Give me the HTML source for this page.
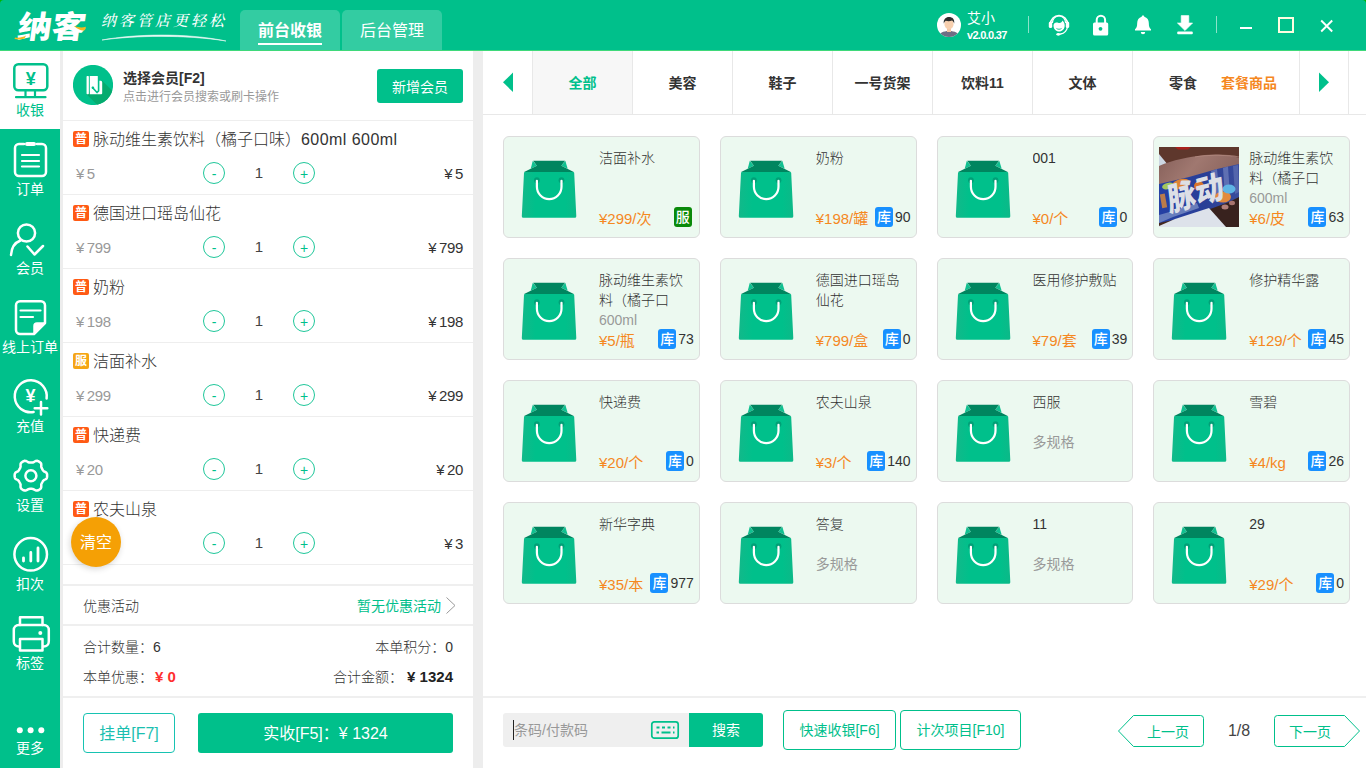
<!DOCTYPE html><html lang="zh-CN"><head><meta charset="utf-8"><title>纳客收银</title><style>
*{box-sizing:border-box;margin:0;padding:0}
html,body{width:1366px;height:768px;overflow:hidden}
body{position:relative;background:#ededed;font-family:"Liberation Sans","Noto Sans CJK SC",sans-serif;color:#333;font-size:14px;font-weight:300}
.abs{position:absolute}
b{font-weight:700}
#hdr{left:0;top:0;width:1366px;height:50px;background:#00c08b;border-radius:4px 4px 0 0}
#hline{left:0;top:50px;width:1366px;height:1px;background:#3fd97a}
#logo{left:15px;top:8px;font-size:31px;line-height:40px;font-weight:900;color:#fff;letter-spacing:0px;transform:skewX(-8deg) scaleX(1.1);transform-origin:0 100%;font-family:"Liberation Sans","Noto Sans CJK SC",sans-serif;white-space:nowrap}
#slogan{left:101px;top:9px;font-size:15px;line-height:24px;color:#fff;font-style:italic;font-weight:500;font-family:"Liberation Serif","Noto Serif CJK SC",serif;letter-spacing:3px;white-space:nowrap}
.tab{font-weight:400;top:10px;height:40px;width:100px;background:rgba(255,255,255,.2);border-radius:5px 5px 0 0;color:#fff;font-size:16px;line-height:22px;text-align:center;padding-top:10px}
.tab b{display:inline-block;border-bottom:2px solid #fff;padding-bottom:1px;font-weight:700}
#side{left:0;top:51px;width:60px;height:717px;background:#00c08b}
.sit{left:0;width:60px;height:79px;color:#fff;text-align:center}
.sit svg{position:absolute;left:0;top:0}
.sit span{font-weight:400;position:absolute;left:-10px;width:80px;top:49px;font-size:14px;line-height:20px;white-space:nowrap}
.sit.on span{font-weight:400}
.sit.on{background:#fff;color:#00c08b;height:78px}
#lp{left:63px;top:51px;width:410px;height:717px;background:#fff}
#rp{left:483px;top:51px;width:883px;height:717px;background:#fff}
.row{left:0;width:410px;height:74px;border-bottom:1px solid #eee}
.bdg{position:absolute;left:10px;top:10px;width:16px;height:16px;border-radius:2px;background:#ff5a14;color:#fff;font-size:12px;line-height:16px;text-align:center;font-weight:700}
.bdg.fu{background:#f5a514}
.nm{position:absolute;left:30px;top:7px;font-size:16px;line-height:24px;white-space:nowrap}
.pr{position:absolute;left:13px;top:41px;font-size:15px;letter-spacing:-0.35px;word-spacing:-1px;line-height:24px;color:#999;white-space:pre}
.tot{position:absolute;right:10px;top:41px;font-size:15px;letter-spacing:-0.35px;word-spacing:-1px;line-height:24px;color:#333;white-space:pre}
.cir{position:absolute;top:41px;width:22px;height:22px;border:1px solid #1fc79a;border-radius:50%;color:#00c08b;font-size:14px;line-height:22px;text-align:center}
.qty{position:absolute;left:180px;width:32px;top:40px;font-size:15px;color:#444;line-height:24px;text-align:center}
.hr2{left:0;width:410px;height:2px;background:#efefef}
.t14{font-size:14px;line-height:20px;white-space:nowrap}
.cat{top:0;height:63px;width:100px;border-right:1px solid #e8e8e8;text-align:center;font-size:14px;line-height:65px;font-weight:700;color:#333}
.card{width:196.75px;height:102px;background:#ecf9f0;border:1px solid #dcdcdc;border-radius:6px}
.card svg.bag{position:absolute;left:11px;top:17px}
.card .cn{position:absolute;left:95px;top:11px;width:88px;max-height:40px;overflow:hidden;font-size:14px;line-height:20px;color:#333}
.card .sp{font-weight:400;position:absolute;left:95px;top:51px;font-size:14px;line-height:20px;color:#999;white-space:nowrap}
.card .cp{font-weight:400;position:absolute;left:95px;top:71px;font-size:15px;line-height:22px;color:#f5881f;white-space:nowrap}
.card .st{position:absolute;right:5px;top:70px;height:20px;font-size:14px;line-height:20px;color:#333;white-space:nowrap}
.card .st i{font-weight:500;display:inline-block;vertical-align:top;width:18px;height:20px;border-radius:3px;background:#1890ff;color:#fff;font-style:normal;font-size:14px;line-height:20px;text-align:center;margin-right:2px}
.card .st i.fu{background:#0a8a0a;margin-right:2px;font-weight:500}
.btn{font-weight:400;border:1px solid #00c08b;border-radius:4px;color:#00c08b;text-align:center;font-size:14px;background:#fff;white-space:nowrap}
</style></head><body>
<div class="abs" style="left:0;top:0;width:5px;height:5px;background:#00b400"></div><div class="abs" style="left:1361px;top:0;width:5px;height:5px;background:#00b400"></div>
<div id="hdr" class="abs"></div><div id="hline" class="abs"></div>
<div id="logo" class="abs">纳客</div>
<svg class="abs" style="left:12px;top:20px" width="80" height="24" viewBox="0 0 80 24"><path d="M3 17.5c4 0.8 8-0.3 11-2l-1.5 3c-3.5 1.2-7 1.2-10 0.5z" fill="#f5b81e"/><path d="M62 6c4 1.5 8 2 12 0.8l-1.2 3.5c-3.5 0.5-7-0.8-10.8-4.3z" fill="#f5b81e"/></svg>
<div id="slogan" class="abs">纳客管店更轻松</div>
<svg class="abs" style="left:100px;top:32px" width="130" height="10" viewBox="0 0 130 10"><path d="M2 8C35 2 85 0.5 126 9C85 2.5 35 3.5 2 8z" fill="#fff" stroke="#fff" stroke-width="0.6" opacity=".9"/></svg>
<div class="abs tab" style="left:240px"><b>前台收银</b></div>
<div class="abs tab" style="left:342px">后台管理</div>
<svg class="abs" style="left:937px;top:13px" width="24" height="24" viewBox="0 0 24 24"><defs><clipPath id="avc"><circle cx="12" cy="12" r="12"/></clipPath></defs><circle cx="12" cy="12" r="12" fill="#fff"/><g clip-path="url(#avc)"><path d="M2 24c0-4 4-6 10-6s10 2 10 6z" fill="#6e6e84"/><rect x="10" y="14" width="4" height="5" fill="#f3c6a5"/><ellipse cx="12" cy="11" rx="4.6" ry="5.4" fill="#f7cfae"/><path d="M6.8 10.5c-0.6-4 2-6.5 5.2-6.5s5.8 2 5.2 6.5c-0.5-1.5-1.2-2.5-2.2-3-2 0.8-4.5 0.8-6.2 0.2-1 0.6-1.6 1.5-2 2.8z" fill="#2e2e2e"/></g></svg>
<div class="abs" style="left:967px;top:8px;color:#fff;font-size:14px;font-weight:400;line-height:20px;white-space:nowrap">艾小</div>
<div class="abs" style="left:967px;top:28px;color:#fff;font-size:11px;line-height:14px;font-weight:700;letter-spacing:-0.7px;white-space:nowrap">v2.0.0.37</div>
<div class="abs" style="left:1028px;top:16px;width:1px;height:17px;background:rgba(255,255,255,.55)"></div>
<svg class="abs" style="left:1047px;top:12px" width="24" height="26" viewBox="0 0 24 26"><g fill="none" stroke="#fff" stroke-linecap="round"><path d="M3.5 12a8.5 8.5 0 0 1 17 0" stroke-width="1.6"/><path d="M5.5 10.5a6.5 6.5 0 0 1 13 0" stroke-width="1.2"/><path d="M20.5 14c0 4-3 7.5-7 8" stroke-width="1.3"/></g><rect x="1.8" y="9.5" width="3.4" height="6.5" rx="1.6" fill="#fff"/><rect x="18.8" y="9.5" width="3.4" height="6.5" rx="1.6" fill="#fff"/><path d="M6.5 13.5c0-2 1.5-3 3-3 1.2 0 2 0.5 3 0.5 1.5 0 2.5-1.2 3-2.5 1.5 1.5 2.2 3 2.2 5 0 3.5-2.5 6-5.6 6s-5.6-2.5-5.6-6z" fill="#fff"/><path d="M9.5 16.5c1.5 1 3.5 1 5 0" stroke="#00c08b" stroke-width="0.9" fill="none"/><ellipse cx="11.3" cy="22.3" rx="2" ry="1.4" fill="#fff"/></svg>
<svg class="abs" style="left:1090px;top:12px" width="22" height="26" viewBox="0 0 22 26"><path d="M6.7 11v-3a4.2 4.2 0 0 1 8.4 0v3" fill="none" stroke="#fff" stroke-width="2"/><rect x="3" y="10.5" width="15.2" height="13" rx="1.5" fill="#fff"/><circle cx="10.5" cy="16.8" r="1.9" fill="#00c08b"/></svg>
<svg class="abs" style="left:1132px;top:12px" width="22" height="26" viewBox="0 0 22 26"><path d="M11 3.5c0.8 0 1.3 0.5 1.3 1.2 3 0.8 4.5 3.3 4.5 6.3 0 3.5 0.7 5 2.2 6.3v1.2h-16v-1.2c1.5-1.3 2.2-2.8 2.2-6.3 0-3 1.5-5.5 4.5-6.3 0-0.7 0.5-1.2 1.3-1.2z" fill="#fff"/><path d="M8.8 20h4.4a2.2 2.2 0 0 1-4.4 0z" fill="#fff"/></svg>
<svg class="abs" style="left:1174px;top:12px" width="22" height="26" viewBox="0 0 22 26"><path d="M7.2 3.6h7.6v7.4h3.8l-7.6 7.6-7.6-7.6h3.8z" fill="#fff" stroke="#fff" stroke-width="0.6" stroke-linejoin="round"/><rect x="3.2" y="19.6" width="15.6" height="2.6" rx="1" fill="#fff"/></svg>
<div class="abs" style="left:1216px;top:16px;width:1px;height:17px;background:rgba(255,255,255,.55)"></div>
<div class="abs" style="left:1240px;top:27px;width:12px;height:2px;background:#fff"></div>
<div class="abs" style="left:1278px;top:17px;width:16px;height:16px;border:2px solid #fdfde0"></div>
<svg class="abs" style="left:1319px;top:18px" width="16" height="16" viewBox="0 0 16 16"><path d="M2.2 2.5l11 11M13.2 2.5l-11 11" stroke="#fff" stroke-width="1.9" fill="none"/></svg>
<div id="side" class="abs"></div>
<div class="abs sit on" style="top:51px"><svg width="60" height="50" viewBox="0 0 60 50"><g fill="none" stroke="currentColor" stroke-width="2.5" stroke-linecap="round" stroke-linejoin="round"><rect x="14.3" y="13.3" width="33" height="26" rx="4"/><path d="M25.5 40v5.5M35 40v5.5M16 46.2h29.5" stroke-width="2.2"/></g><text x="30.7" y="34.2" text-anchor="middle" font-size="18" font-weight="700" fill="currentColor" font-family="Liberation Sans, sans-serif">¥</text></svg><span>收银</span></div>
<div class="abs sit" style="top:130px"><svg width="60" height="50" viewBox="0 0 60 50"><g fill="none" stroke="currentColor" stroke-width="2.5" stroke-linecap="round" stroke-linejoin="round"><path d="M24 14h-5a4 4 0 0 0-4 4v24a4 4 0 0 0 4 4h23a4 4 0 0 0 4-4v-24a4 4 0 0 0-4-4h-5"/><path d="M22 25h17M22 31h17M22 36.5h17" stroke-width="2.2"/></g><rect x="25" y="12" width="11" height="4" rx="2" fill="currentColor"/></svg><span>订单</span></div>
<div class="abs sit" style="top:209px"><svg width="60" height="50" viewBox="0 0 60 50"><g fill="none" stroke="currentColor" stroke-width="2.5" stroke-linecap="round" stroke-linejoin="round"><circle cx="26.5" cy="24" r="8.6"/><path d="M20.5 31.5c-5.5 2-9 7-9.5 14.5"/><path d="M27.5 37.5l7 8 8.5-8.5"/></g></svg><span>会员</span></div>
<div class="abs sit" style="top:288px"><svg width="60" height="50" viewBox="0 0 60 50"><g fill="none" stroke="currentColor" stroke-width="2.5" stroke-linecap="round" stroke-linejoin="round"><path d="M20 13.3h21a4 4 0 0 1 4 4v17.7l-11 11h-14a4 4 0 0 1-4-4v-24.7a4 4 0 0 1 4-4z"/><path d="M20.5 22.5h20M20.5 29h12.5" stroke-width="2.2"/></g><path d="M34 46v-8a3 3 0 0 1 3-3h8z" fill="currentColor" stroke="currentColor" stroke-width="1.5" stroke-linejoin="round"/></svg><span>线上订单</span></div>
<div class="abs sit" style="top:367px"><svg width="60" height="50" viewBox="0 0 60 50"><g fill="none" stroke="currentColor" stroke-width="2.5" stroke-linecap="round" stroke-linejoin="round"><path d="M46.6 31.5A16 16 0 1 0 33.6 45.06"/><path d="M41 34.9v12.6M34.7 41.2h12.6" /></g><text x="30.5" y="35.3" text-anchor="middle" font-size="18" font-weight="700" fill="currentColor" font-family="Liberation Sans, sans-serif">¥</text></svg><span>充值</span></div>
<div class="abs sit" style="top:446px"><svg width="60" height="50" viewBox="0 0 60 50"><g fill="none" stroke="currentColor" stroke-width="2.5" stroke-linecap="round" stroke-linejoin="round" stroke-width="2.9"><path d="M47.1 29.7L47.1 30.8L46.9 31.8L46.3 32.8L45.1 33.5L43.9 34.1L43.2 34.8L42.7 35.5L42.3 36.3L41.9 37L41.5 37.8L41.2 38.7L41.3 40.1L41.2 41.5L40.7 42.5L39.9 43.2L39 43.8L38.1 44.3L37.1 44.6L35.9 44.5L34.7 43.9L33.6 43.2L32.6 42.9L31.8 42.8L30.9 42.8L30 42.8L29.2 42.9L28.2 43.2L27.1 43.9L25.9 44.5L24.7 44.6L23.7 44.3L22.8 43.8L21.9 43.2L21.1 42.5L20.6 41.5L20.5 40.1L20.6 38.7L20.3 37.8L19.9 37L19.5 36.3L19.1 35.5L18.6 34.8L17.9 34.1L16.7 33.5L15.5 32.8L14.9 31.8L14.7 30.8L14.6 29.7L14.7 28.6L14.9 27.6L15.5 26.6L16.7 25.9L17.9 25.3L18.6 24.6L19.1 23.9L19.5 23.1L19.9 22.4L20.3 21.6L20.6 20.7L20.5 19.3L20.6 17.9L21.1 16.9L21.9 16.2L22.8 15.6L23.7 15.1L24.7 14.8L25.9 14.9L27.1 15.5L28.2 16.2L29.2 16.5L30 16.6L30.9 16.6L31.8 16.6L32.6 16.5L33.6 16.2L34.7 15.5L35.9 14.9L37.1 14.8L38.1 15.1L39 15.6L39.9 16.2L40.7 16.9L41.2 17.9L41.3 19.3L41.2 20.7L41.5 21.6L41.9 22.4L42.3 23.1L42.7 23.9L43.2 24.6L43.9 25.3L45.1 25.9L46.3 26.6L46.9 27.6L47.1 28.6Z"/><circle cx="30.9" cy="29.7" r="5.5"/></g></svg><span>设置</span></div>
<div class="abs sit" style="top:525px"><svg width="60" height="50" viewBox="0 0 60 50"><g fill="none" stroke="currentColor" stroke-width="2.5" stroke-linecap="round" stroke-linejoin="round"><circle cx="30.7" cy="29.3" r="16.3"/><path d="M23.5 36v-3.2M30.8 36v-8.5M38 36v-13" stroke-width="2.8"/></g></svg><span>扣次</span></div>
<div class="abs sit" style="top:604px"><svg width="60" height="50" viewBox="0 0 60 50"><g fill="none" stroke="currentColor" stroke-width="2.5" stroke-linecap="round" stroke-linejoin="round"><path d="M20 21v-7.7h22.5v7.7"/><rect x="13.8" y="21" width="35" height="21.5" rx="5"/><rect x="20" y="35" width="22.5" height="11.5" fill="#00c08b"/></g><circle cx="40.3" cy="29" r="2" fill="currentColor"/></svg><span>标签</span></div>
<div class="abs" style="left:0;top:717px;width:60px;height:51px;color:#fff;text-align:center"><svg class="abs" style="left:0;top:0" width="60" height="26" viewBox="0 0 60 26"><circle cx="19.8" cy="13.3" r="3" fill="#fff"/><circle cx="30.6" cy="13.3" r="3" fill="#fff"/><circle cx="41.3" cy="13.3" r="3" fill="#fff"/></svg><span class="abs" style="left:0;width:60px;top:21px;font-size:14px;font-weight:400;line-height:20px">更多</span></div>
<div id="lp" class="abs">
<div class="abs" style="left:0;top:0;width:410px;height:70px;border-bottom:1px solid #eee"></div>
<svg class="abs" style="left:10px;top:14px" width="40" height="40" viewBox="0 0 40 40"><defs><clipPath id="mc"><circle cx="20" cy="20" r="20.1"/></clipPath></defs><circle cx="20" cy="20" r="20.1" fill="#00c08b"/><g clip-path="url(#mc)"><path d="M29.2 15.8L50 36.6L50 50L34.35 50L13.55 29.2Z" fill="#05ab6e"/></g><rect x="13.55" y="10.95" width="2.3" height="18.25" rx="0.7" fill="#fff"/><path d="M16.8 10.95h7.7a0.8 0.8 0 0 1 0.8 0.8v4.05h2.4a1.5 1.5 0 0 1 1.5 1.5v10.9a1 1 0 0 1-1 1h-11.4z" fill="#fff"/><path d="M19.7 22.7l4.3 4.85 1.6-1.65v-14.6" fill="none" stroke="#00c08b" stroke-width="1.6" stroke-linecap="round" stroke-linejoin="round"/><circle cx="19.9" cy="22.8" r="1.3" fill="#00c08b"/></svg>
<div class="abs" style="left:60px;top:17px;font-size:14px;line-height:20px;font-weight:700;color:#333;white-space:nowrap">选择会员[F2]</div>
<div class="abs" style="left:60px;top:37px;font-size:12px;font-weight:400;line-height:18px;color:#999;white-space:nowrap">点击进行会员搜索或刷卡操作</div>
<div class="abs" style="left:314px;top:18px;width:86px;height:34px;background:#00c08b;border-radius:3px;color:#fff;font-weight:400;font-size:14px;line-height:36px;text-align:center">新增会员</div>
<div class="abs row" style="top:70px"><div class="bdg">普</div><div class="nm">脉动维生素饮料（橘子口味）<span style="letter-spacing:.45px">600ml 600ml</span></div><div class="pr">¥ 5</div><div class="cir" style="left:140px">-</div><div class="qty">1</div><div class="cir" style="left:230px">+</div><div class="tot">¥ 5</div></div>
<div class="abs row" style="top:144px"><div class="bdg">普</div><div class="nm">德国进口瑶岛仙花</div><div class="pr">¥ 799</div><div class="cir" style="left:140px">-</div><div class="qty">1</div><div class="cir" style="left:230px">+</div><div class="tot">¥ 799</div></div>
<div class="abs row" style="top:218px"><div class="bdg">普</div><div class="nm">奶粉</div><div class="pr">¥ 198</div><div class="cir" style="left:140px">-</div><div class="qty">1</div><div class="cir" style="left:230px">+</div><div class="tot">¥ 198</div></div>
<div class="abs row" style="top:292px"><div class="bdg fu">服</div><div class="nm">洁面补水</div><div class="pr">¥ 299</div><div class="cir" style="left:140px">-</div><div class="qty">1</div><div class="cir" style="left:230px">+</div><div class="tot">¥ 299</div></div>
<div class="abs row" style="top:366px"><div class="bdg">普</div><div class="nm">快递费</div><div class="pr">¥ 20</div><div class="cir" style="left:140px">-</div><div class="qty">1</div><div class="cir" style="left:230px">+</div><div class="tot">¥ 20</div></div>
<div class="abs row" style="top:440px"><div class="bdg">普</div><div class="nm">农夫山泉</div><div class="cir" style="left:140px">-</div><div class="qty">1</div><div class="cir" style="left:230px">+</div><div class="tot">¥ 3</div></div>
<div class="abs" style="left:8px;top:466px;width:50px;height:50px;border-radius:50%;background:#f5a005;color:#fff;font-weight:400;font-size:16px;line-height:52px;text-align:center;box-shadow:-1px 2px 6px rgba(0,0,0,.16)">清空</div>
<div class="abs hr2" style="top:533px"></div>
<div class="abs t14" style="left:20px;top:545px">优惠活动</div>
<div class="abs t14" style="left:294px;top:545px;font-weight:400;color:#00c08b">暂无优惠活动</div>
<svg class="abs" style="left:381px;top:545px" width="14" height="20" viewBox="0 0 14 20"><path d="M2.5 1.5l8.5 8-8.5 8" fill="none" stroke="#999" stroke-width="1"/></svg>
<div class="abs hr2" style="top:573px"></div>
<div class="abs t14" style="left:20px;top:586px">合计数量：6</div>
<div class="abs t14" style="right:20px;top:586px">本单积分：0</div>
<div class="abs t14" style="left:20px;top:616px">本单优惠：<b style="color:#ff3030;font-size:15px;margin-left:2px">¥ 0</b></div>
<div class="abs t14" style="right:20px;top:616px">合计金额：<b style="color:#222;font-size:15px;margin-left:4px">¥ 1324</b></div>
<div class="abs hr2" style="top:645px"></div>
<div class="abs" style="left:20px;top:662px;width:92px;height:40px;border:1px solid #17c3b2;border-radius:4px;color:#1bbfb0;font-weight:400;font-size:16px;line-height:40px;text-align:center;white-space:nowrap">挂单[F7]</div>
<div class="abs" style="left:135px;top:662px;width:255px;height:40px;background:#00c08b;border-radius:3px;color:#fff;font-weight:400;font-size:16px;line-height:42px;text-align:center;white-space:pre">实收[F5]：¥ 1324</div>
</div>
<div id="rp" class="abs">
<svg class="abs" width="0" height="0" style="left:0;top:0"><defs><linearGradient id="bg" x1="0" x2="1" y1="0" y2="0"><stop offset="0" stop-color="#12b98a"/><stop offset="0.25" stop-color="#00c08b"/><stop offset="0.8" stop-color="#00c08b"/><stop offset="1" stop-color="#0cb988"/></linearGradient></defs></svg>
<div class="abs" style="left:0;top:63px;width:883px;height:1px;background:#e8e8e8"></div>
<div class="abs cat" style="left:0;width:50px"></div>
<svg class="abs" style="left:19px;top:21px" width="12" height="21" viewBox="0 0 12 21"><path d="M11 0.5v19.5l-10-9.7z" fill="#00c08b"/></svg>
<div class="abs cat" style="left:50px;background:#f7f7f7;color:#00c08b;">全部</div>
<div class="abs cat" style="left:150px;">美容</div>
<div class="abs cat" style="left:250px;">鞋子</div>
<div class="abs cat" style="left:350px;">一号货架</div>
<div class="abs cat" style="left:450px;">饮料11</div>
<div class="abs cat" style="left:550px;">文体</div>
<div class="abs cat" style="left:650px;border-right:none">零食</div>
<div class="abs cat" style="left:716px;width:101px;border-right:1px solid #e8e8e8;color:#f5881f;text-align:left;padding-left:22px">套餐商品</div>
<div class="abs cat" style="left:817px;width:49px"></div>
<svg class="abs" style="left:835px;top:21px" width="12" height="21" viewBox="0 0 12 21"><path d="M1 0.5v19.5l10-9.7z" fill="#00c08b"/></svg>
<div class="abs card" style="left:20.0px;top:85px"><svg class="bag" width="70" height="70" viewBox="0 0 70 70"><path d="M10 18h48.2a1 1 0 0 1 1 1l2.1 43.3a1.5 1.5 0 0 1-1.5 1.5h-51.5a1.5 1.5 0 0 1-1.5-1.5l2.2-43.3a1 1 0 0 1 1-1z" fill="url(#bg)"/><path d="M17.8 6.8l4.1 4.9-6.2 3.1z" fill="#10c090"/><path d="M50.3 6.8l-4 4.9 6.4 3.1z" fill="#10c090"/><path d="M18.2 6.8h31.8l-3.7 4.9 12.5 6.3h-49.7l12.8-6.3z" fill="#00855f"/><circle cx="21.9" cy="26.2" r="2.9" fill="#00a077"/><circle cx="46.5" cy="26.2" r="2.9" fill="#00a077"/><path d="M21.9 26.8v6a12.3 12.3 0 0 0 24.6 0v-6" fill="none" stroke="#fff" stroke-width="2.2" stroke-linecap="round"/></svg><div class="cn">洁面补水</div><div class="cp">¥299/次</div><div class="st"><i class="fu">服</i></div></div>
<div class="abs card" style="left:236.75px;top:85px"><svg class="bag" width="70" height="70" viewBox="0 0 70 70"><path d="M10 18h48.2a1 1 0 0 1 1 1l2.1 43.3a1.5 1.5 0 0 1-1.5 1.5h-51.5a1.5 1.5 0 0 1-1.5-1.5l2.2-43.3a1 1 0 0 1 1-1z" fill="url(#bg)"/><path d="M17.8 6.8l4.1 4.9-6.2 3.1z" fill="#10c090"/><path d="M50.3 6.8l-4 4.9 6.4 3.1z" fill="#10c090"/><path d="M18.2 6.8h31.8l-3.7 4.9 12.5 6.3h-49.7l12.8-6.3z" fill="#00855f"/><circle cx="21.9" cy="26.2" r="2.9" fill="#00a077"/><circle cx="46.5" cy="26.2" r="2.9" fill="#00a077"/><path d="M21.9 26.8v6a12.3 12.3 0 0 0 24.6 0v-6" fill="none" stroke="#fff" stroke-width="2.2" stroke-linecap="round"/></svg><div class="cn">奶粉</div><div class="cp">¥198/罐</div><div class="st"><i>库</i>90</div></div>
<div class="abs card" style="left:453.5px;top:85px"><svg class="bag" width="70" height="70" viewBox="0 0 70 70"><path d="M10 18h48.2a1 1 0 0 1 1 1l2.1 43.3a1.5 1.5 0 0 1-1.5 1.5h-51.5a1.5 1.5 0 0 1-1.5-1.5l2.2-43.3a1 1 0 0 1 1-1z" fill="url(#bg)"/><path d="M17.8 6.8l4.1 4.9-6.2 3.1z" fill="#10c090"/><path d="M50.3 6.8l-4 4.9 6.4 3.1z" fill="#10c090"/><path d="M18.2 6.8h31.8l-3.7 4.9 12.5 6.3h-49.7l12.8-6.3z" fill="#00855f"/><circle cx="21.9" cy="26.2" r="2.9" fill="#00a077"/><circle cx="46.5" cy="26.2" r="2.9" fill="#00a077"/><path d="M21.9 26.8v6a12.3 12.3 0 0 0 24.6 0v-6" fill="none" stroke="#fff" stroke-width="2.2" stroke-linecap="round"/></svg><div class="cn">001</div><div class="cp">¥0/个</div><div class="st"><i>库</i>0</div></div>
<div class="abs card" style="left:670.25px;top:85px"><svg class="abs" style="left:5px;top:10px" width="80" height="80" viewBox="0 0 80 80"><defs><clipPath id="pc"><rect width="80" height="80"/></clipPath><linearGradient id="hand" x1="0" y1="0" x2="1" y2="0.3"><stop offset="0" stop-color="#86605a"/><stop offset="0.5" stop-color="#a07870"/><stop offset="1" stop-color="#8c655e"/></linearGradient><linearGradient id="btl" x1="0" y1="0" x2="1" y2="0"><stop offset="0" stop-color="#2440a4"/><stop offset="0.6" stop-color="#2a3f96"/><stop offset="1" stop-color="#3a4c9c"/></linearGradient></defs><g clip-path="url(#pc)"><rect width="80" height="80" fill="#44281f"/><path d="M0 0H80V12L46 11 22 15 0 21Z" fill="#5e372c"/><path d="M16 0h16l-3 2.5h-10z" fill="#a8211c"/><path d="M0 7l9 11-9 4z" fill="#cdd7e3"/><path d="M0 19C14 13 30 9.5 44 8.5 58 7 72 8 80 11V21L60 26 40 31 20 36 0 38Z" fill="url(#hand)"/><path d="M36 10c10-2 30-3 44 0" fill="none" stroke="#b48a80" stroke-width="1.2" opacity=".7"/><path d="M50 62l30-12v30h-14z" fill="#38221e"/><path d="M0 37L30 30 58 22 80 17V50L70 55 54 61 38 66 14 73 0 76Z" fill="url(#btl)"/><path d="M52 24l6-2 3 30-6 3z" fill="#7f8fc6" opacity=".55"/><path d="M64 21l5-1.5 2 29-5 2z" fill="#8a98cc" opacity=".5"/><path d="M74 19l5-1 1 27-4 2z" fill="#6f7fbc" opacity=".5"/><path d="M0 79L16 72 50 61 67 80H0Z" fill="#dde2ea"/><path d="M0 68l14-4 24-8 2 5-26 9-14 6z" fill="#9fb0d6" opacity=".55"/><ellipse cx="66" cy="60" rx="3.5" ry="2.5" fill="#b27f7a"/><ellipse cx="73" cy="56" rx="3" ry="2.2" fill="#a9746f"/><ellipse cx="22" cy="37" rx="9" ry="5" fill="#dd8433" transform="rotate(-14 22 37)"/><ellipse cx="9" cy="39" rx="6" ry="3.2" fill="#a3c85c" transform="rotate(-14 9 39)"/><ellipse cx="40" cy="39" rx="5" ry="4.5" fill="#d8752a"/><ellipse cx="64" cy="50" rx="8" ry="5.5" fill="#e38a3c"/><ellipse cx="70" cy="42" rx="6.5" ry="4.5" fill="#5fb4e4"/><rect x="2" y="47" width="5" height="14" fill="#e08a35" opacity=".8" transform="rotate(-10 4 54)"/><text x="0" y="0" font-size="29" font-weight="900" fill="#dcdfe6" transform="translate(10 65) rotate(-15) skewX(-8) scale(1 1.1)" font-family="Liberation Sans, Noto Sans CJK SC, sans-serif">脉动</text></g></svg><div class="cn">脉动维生素饮料（橘子口味）</div><div class="sp">600ml</div><div class="cp">¥6/皮</div><div class="st"><i>库</i>63</div></div>
<div class="abs card" style="left:20.0px;top:207px"><svg class="bag" width="70" height="70" viewBox="0 0 70 70"><path d="M10 18h48.2a1 1 0 0 1 1 1l2.1 43.3a1.5 1.5 0 0 1-1.5 1.5h-51.5a1.5 1.5 0 0 1-1.5-1.5l2.2-43.3a1 1 0 0 1 1-1z" fill="url(#bg)"/><path d="M17.8 6.8l4.1 4.9-6.2 3.1z" fill="#10c090"/><path d="M50.3 6.8l-4 4.9 6.4 3.1z" fill="#10c090"/><path d="M18.2 6.8h31.8l-3.7 4.9 12.5 6.3h-49.7l12.8-6.3z" fill="#00855f"/><circle cx="21.9" cy="26.2" r="2.9" fill="#00a077"/><circle cx="46.5" cy="26.2" r="2.9" fill="#00a077"/><path d="M21.9 26.8v6a12.3 12.3 0 0 0 24.6 0v-6" fill="none" stroke="#fff" stroke-width="2.2" stroke-linecap="round"/></svg><div class="cn">脉动维生素饮料（橘子口味）</div><div class="sp">600ml</div><div class="cp">¥5/瓶</div><div class="st"><i>库</i>73</div></div>
<div class="abs card" style="left:236.75px;top:207px"><svg class="bag" width="70" height="70" viewBox="0 0 70 70"><path d="M10 18h48.2a1 1 0 0 1 1 1l2.1 43.3a1.5 1.5 0 0 1-1.5 1.5h-51.5a1.5 1.5 0 0 1-1.5-1.5l2.2-43.3a1 1 0 0 1 1-1z" fill="url(#bg)"/><path d="M17.8 6.8l4.1 4.9-6.2 3.1z" fill="#10c090"/><path d="M50.3 6.8l-4 4.9 6.4 3.1z" fill="#10c090"/><path d="M18.2 6.8h31.8l-3.7 4.9 12.5 6.3h-49.7l12.8-6.3z" fill="#00855f"/><circle cx="21.9" cy="26.2" r="2.9" fill="#00a077"/><circle cx="46.5" cy="26.2" r="2.9" fill="#00a077"/><path d="M21.9 26.8v6a12.3 12.3 0 0 0 24.6 0v-6" fill="none" stroke="#fff" stroke-width="2.2" stroke-linecap="round"/></svg><div class="cn">德国进口瑶岛仙花</div><div class="cp">¥799/盒</div><div class="st"><i>库</i>0</div></div>
<div class="abs card" style="left:453.5px;top:207px"><svg class="bag" width="70" height="70" viewBox="0 0 70 70"><path d="M10 18h48.2a1 1 0 0 1 1 1l2.1 43.3a1.5 1.5 0 0 1-1.5 1.5h-51.5a1.5 1.5 0 0 1-1.5-1.5l2.2-43.3a1 1 0 0 1 1-1z" fill="url(#bg)"/><path d="M17.8 6.8l4.1 4.9-6.2 3.1z" fill="#10c090"/><path d="M50.3 6.8l-4 4.9 6.4 3.1z" fill="#10c090"/><path d="M18.2 6.8h31.8l-3.7 4.9 12.5 6.3h-49.7l12.8-6.3z" fill="#00855f"/><circle cx="21.9" cy="26.2" r="2.9" fill="#00a077"/><circle cx="46.5" cy="26.2" r="2.9" fill="#00a077"/><path d="M21.9 26.8v6a12.3 12.3 0 0 0 24.6 0v-6" fill="none" stroke="#fff" stroke-width="2.2" stroke-linecap="round"/></svg><div class="cn">医用修护敷贴</div><div class="cp">¥79/套</div><div class="st"><i>库</i>39</div></div>
<div class="abs card" style="left:670.25px;top:207px"><svg class="bag" width="70" height="70" viewBox="0 0 70 70"><path d="M10 18h48.2a1 1 0 0 1 1 1l2.1 43.3a1.5 1.5 0 0 1-1.5 1.5h-51.5a1.5 1.5 0 0 1-1.5-1.5l2.2-43.3a1 1 0 0 1 1-1z" fill="url(#bg)"/><path d="M17.8 6.8l4.1 4.9-6.2 3.1z" fill="#10c090"/><path d="M50.3 6.8l-4 4.9 6.4 3.1z" fill="#10c090"/><path d="M18.2 6.8h31.8l-3.7 4.9 12.5 6.3h-49.7l12.8-6.3z" fill="#00855f"/><circle cx="21.9" cy="26.2" r="2.9" fill="#00a077"/><circle cx="46.5" cy="26.2" r="2.9" fill="#00a077"/><path d="M21.9 26.8v6a12.3 12.3 0 0 0 24.6 0v-6" fill="none" stroke="#fff" stroke-width="2.2" stroke-linecap="round"/></svg><div class="cn">修护精华露</div><div class="cp">¥129/个</div><div class="st"><i>库</i>45</div></div>
<div class="abs card" style="left:20.0px;top:329px"><svg class="bag" width="70" height="70" viewBox="0 0 70 70"><path d="M10 18h48.2a1 1 0 0 1 1 1l2.1 43.3a1.5 1.5 0 0 1-1.5 1.5h-51.5a1.5 1.5 0 0 1-1.5-1.5l2.2-43.3a1 1 0 0 1 1-1z" fill="url(#bg)"/><path d="M17.8 6.8l4.1 4.9-6.2 3.1z" fill="#10c090"/><path d="M50.3 6.8l-4 4.9 6.4 3.1z" fill="#10c090"/><path d="M18.2 6.8h31.8l-3.7 4.9 12.5 6.3h-49.7l12.8-6.3z" fill="#00855f"/><circle cx="21.9" cy="26.2" r="2.9" fill="#00a077"/><circle cx="46.5" cy="26.2" r="2.9" fill="#00a077"/><path d="M21.9 26.8v6a12.3 12.3 0 0 0 24.6 0v-6" fill="none" stroke="#fff" stroke-width="2.2" stroke-linecap="round"/></svg><div class="cn">快递费</div><div class="cp">¥20/个</div><div class="st"><i>库</i>0</div></div>
<div class="abs card" style="left:236.75px;top:329px"><svg class="bag" width="70" height="70" viewBox="0 0 70 70"><path d="M10 18h48.2a1 1 0 0 1 1 1l2.1 43.3a1.5 1.5 0 0 1-1.5 1.5h-51.5a1.5 1.5 0 0 1-1.5-1.5l2.2-43.3a1 1 0 0 1 1-1z" fill="url(#bg)"/><path d="M17.8 6.8l4.1 4.9-6.2 3.1z" fill="#10c090"/><path d="M50.3 6.8l-4 4.9 6.4 3.1z" fill="#10c090"/><path d="M18.2 6.8h31.8l-3.7 4.9 12.5 6.3h-49.7l12.8-6.3z" fill="#00855f"/><circle cx="21.9" cy="26.2" r="2.9" fill="#00a077"/><circle cx="46.5" cy="26.2" r="2.9" fill="#00a077"/><path d="M21.9 26.8v6a12.3 12.3 0 0 0 24.6 0v-6" fill="none" stroke="#fff" stroke-width="2.2" stroke-linecap="round"/></svg><div class="cn">农夫山泉</div><div class="cp">¥3/个</div><div class="st"><i>库</i>140</div></div>
<div class="abs card" style="left:453.5px;top:329px"><svg class="bag" width="70" height="70" viewBox="0 0 70 70"><path d="M10 18h48.2a1 1 0 0 1 1 1l2.1 43.3a1.5 1.5 0 0 1-1.5 1.5h-51.5a1.5 1.5 0 0 1-1.5-1.5l2.2-43.3a1 1 0 0 1 1-1z" fill="url(#bg)"/><path d="M17.8 6.8l4.1 4.9-6.2 3.1z" fill="#10c090"/><path d="M50.3 6.8l-4 4.9 6.4 3.1z" fill="#10c090"/><path d="M18.2 6.8h31.8l-3.7 4.9 12.5 6.3h-49.7l12.8-6.3z" fill="#00855f"/><circle cx="21.9" cy="26.2" r="2.9" fill="#00a077"/><circle cx="46.5" cy="26.2" r="2.9" fill="#00a077"/><path d="M21.9 26.8v6a12.3 12.3 0 0 0 24.6 0v-6" fill="none" stroke="#fff" stroke-width="2.2" stroke-linecap="round"/></svg><div class="cn">西服</div><div class="sp">多规格</div></div>
<div class="abs card" style="left:670.25px;top:329px"><svg class="bag" width="70" height="70" viewBox="0 0 70 70"><path d="M10 18h48.2a1 1 0 0 1 1 1l2.1 43.3a1.5 1.5 0 0 1-1.5 1.5h-51.5a1.5 1.5 0 0 1-1.5-1.5l2.2-43.3a1 1 0 0 1 1-1z" fill="url(#bg)"/><path d="M17.8 6.8l4.1 4.9-6.2 3.1z" fill="#10c090"/><path d="M50.3 6.8l-4 4.9 6.4 3.1z" fill="#10c090"/><path d="M18.2 6.8h31.8l-3.7 4.9 12.5 6.3h-49.7l12.8-6.3z" fill="#00855f"/><circle cx="21.9" cy="26.2" r="2.9" fill="#00a077"/><circle cx="46.5" cy="26.2" r="2.9" fill="#00a077"/><path d="M21.9 26.8v6a12.3 12.3 0 0 0 24.6 0v-6" fill="none" stroke="#fff" stroke-width="2.2" stroke-linecap="round"/></svg><div class="cn">雪碧</div><div class="cp">¥4/kg</div><div class="st"><i>库</i>26</div></div>
<div class="abs card" style="left:20.0px;top:451px"><svg class="bag" width="70" height="70" viewBox="0 0 70 70"><path d="M10 18h48.2a1 1 0 0 1 1 1l2.1 43.3a1.5 1.5 0 0 1-1.5 1.5h-51.5a1.5 1.5 0 0 1-1.5-1.5l2.2-43.3a1 1 0 0 1 1-1z" fill="url(#bg)"/><path d="M17.8 6.8l4.1 4.9-6.2 3.1z" fill="#10c090"/><path d="M50.3 6.8l-4 4.9 6.4 3.1z" fill="#10c090"/><path d="M18.2 6.8h31.8l-3.7 4.9 12.5 6.3h-49.7l12.8-6.3z" fill="#00855f"/><circle cx="21.9" cy="26.2" r="2.9" fill="#00a077"/><circle cx="46.5" cy="26.2" r="2.9" fill="#00a077"/><path d="M21.9 26.8v6a12.3 12.3 0 0 0 24.6 0v-6" fill="none" stroke="#fff" stroke-width="2.2" stroke-linecap="round"/></svg><div class="cn">新华字典</div><div class="cp">¥35/本</div><div class="st"><i>库</i>977</div></div>
<div class="abs card" style="left:236.75px;top:451px"><svg class="bag" width="70" height="70" viewBox="0 0 70 70"><path d="M10 18h48.2a1 1 0 0 1 1 1l2.1 43.3a1.5 1.5 0 0 1-1.5 1.5h-51.5a1.5 1.5 0 0 1-1.5-1.5l2.2-43.3a1 1 0 0 1 1-1z" fill="url(#bg)"/><path d="M17.8 6.8l4.1 4.9-6.2 3.1z" fill="#10c090"/><path d="M50.3 6.8l-4 4.9 6.4 3.1z" fill="#10c090"/><path d="M18.2 6.8h31.8l-3.7 4.9 12.5 6.3h-49.7l12.8-6.3z" fill="#00855f"/><circle cx="21.9" cy="26.2" r="2.9" fill="#00a077"/><circle cx="46.5" cy="26.2" r="2.9" fill="#00a077"/><path d="M21.9 26.8v6a12.3 12.3 0 0 0 24.6 0v-6" fill="none" stroke="#fff" stroke-width="2.2" stroke-linecap="round"/></svg><div class="cn">答复</div><div class="sp">多规格</div></div>
<div class="abs card" style="left:453.5px;top:451px"><svg class="bag" width="70" height="70" viewBox="0 0 70 70"><path d="M10 18h48.2a1 1 0 0 1 1 1l2.1 43.3a1.5 1.5 0 0 1-1.5 1.5h-51.5a1.5 1.5 0 0 1-1.5-1.5l2.2-43.3a1 1 0 0 1 1-1z" fill="url(#bg)"/><path d="M17.8 6.8l4.1 4.9-6.2 3.1z" fill="#10c090"/><path d="M50.3 6.8l-4 4.9 6.4 3.1z" fill="#10c090"/><path d="M18.2 6.8h31.8l-3.7 4.9 12.5 6.3h-49.7l12.8-6.3z" fill="#00855f"/><circle cx="21.9" cy="26.2" r="2.9" fill="#00a077"/><circle cx="46.5" cy="26.2" r="2.9" fill="#00a077"/><path d="M21.9 26.8v6a12.3 12.3 0 0 0 24.6 0v-6" fill="none" stroke="#fff" stroke-width="2.2" stroke-linecap="round"/></svg><div class="cn">11</div><div class="sp">多规格</div></div>
<div class="abs card" style="left:670.25px;top:451px"><svg class="bag" width="70" height="70" viewBox="0 0 70 70"><path d="M10 18h48.2a1 1 0 0 1 1 1l2.1 43.3a1.5 1.5 0 0 1-1.5 1.5h-51.5a1.5 1.5 0 0 1-1.5-1.5l2.2-43.3a1 1 0 0 1 1-1z" fill="url(#bg)"/><path d="M17.8 6.8l4.1 4.9-6.2 3.1z" fill="#10c090"/><path d="M50.3 6.8l-4 4.9 6.4 3.1z" fill="#10c090"/><path d="M18.2 6.8h31.8l-3.7 4.9 12.5 6.3h-49.7l12.8-6.3z" fill="#00855f"/><circle cx="21.9" cy="26.2" r="2.9" fill="#00a077"/><circle cx="46.5" cy="26.2" r="2.9" fill="#00a077"/><path d="M21.9 26.8v6a12.3 12.3 0 0 0 24.6 0v-6" fill="none" stroke="#fff" stroke-width="2.2" stroke-linecap="round"/></svg><div class="cn">29</div><div class="cp">¥29/个</div><div class="st"><i>库</i>0</div></div>
<div class="abs" style="left:0;top:645px;width:883px;height:2px;background:#efefef"></div>
<div class="abs" style="left:20px;top:662px;width:186px;height:34px;background:#efefef;border-radius:3px 0 0 3px"></div>
<div class="abs" style="left:30px;top:669px;width:1px;height:20px;background:#222"></div>
<div class="abs t14" style="left:31px;top:669px;font-weight:400;color:#999">条码/付款码</div>
<svg class="abs" style="left:167px;top:669px" width="30" height="20" viewBox="0 0 30 20"><rect x="1.8" y="1.8" width="26.4" height="16.4" rx="2.5" fill="none" stroke="#00c08b" stroke-width="1.7"/><path d="M6.5 7.5h3M12 7.5h3M17.5 7.5h3M23 7.5h1.5M6.5 12.5h2.5M11.5 12.5h9M23 12.5h1.5" stroke="#00c08b" stroke-width="1.8" fill="none"/></svg>
<div class="abs" style="left:206px;top:662px;width:74px;height:34px;background:#00c08b;border-radius:0 3px 3px 0;color:#fff;font-weight:400;font-size:14px;line-height:34px;text-align:center">搜索</div>
<div class="abs btn" style="left:300px;top:659px;width:113px;height:40px;line-height:38px">快速收银[F6]</div>
<div class="abs btn" style="left:417px;top:659px;width:121px;height:40px;line-height:38px">计次项目[F10]</div>
<svg class="abs" style="left:633px;top:662px" width="90" height="36" viewBox="0 0 90 36"><path d="M2.5 18l15-15.5h67a3 3 0 0 1 3 3v25a3 3 0 0 1-3 3h-67z" fill="#fff" stroke="#00c08b" stroke-width="1"/></svg>
<div class="abs t14" style="left:664px;top:671px;font-weight:400;color:#00c08b">上一页</div>
<div class="abs" style="left:726px;top:668px;width:60px;text-align:center;font-size:16px;line-height:24px;color:#444">1/8</div>
<svg class="abs" style="left:789px;top:662px" width="90" height="36" viewBox="0 0 90 36"><path d="M87.5 18l-15-15.5h-67a3 3 0 0 0-3 3v25a3 3 0 0 0 3 3h67z" fill="#fff" stroke="#00c08b" stroke-width="1"/></svg>
<div class="abs t14" style="left:806px;top:671px;font-weight:400;color:#00c08b">下一页</div>
</div>
</body></html>
